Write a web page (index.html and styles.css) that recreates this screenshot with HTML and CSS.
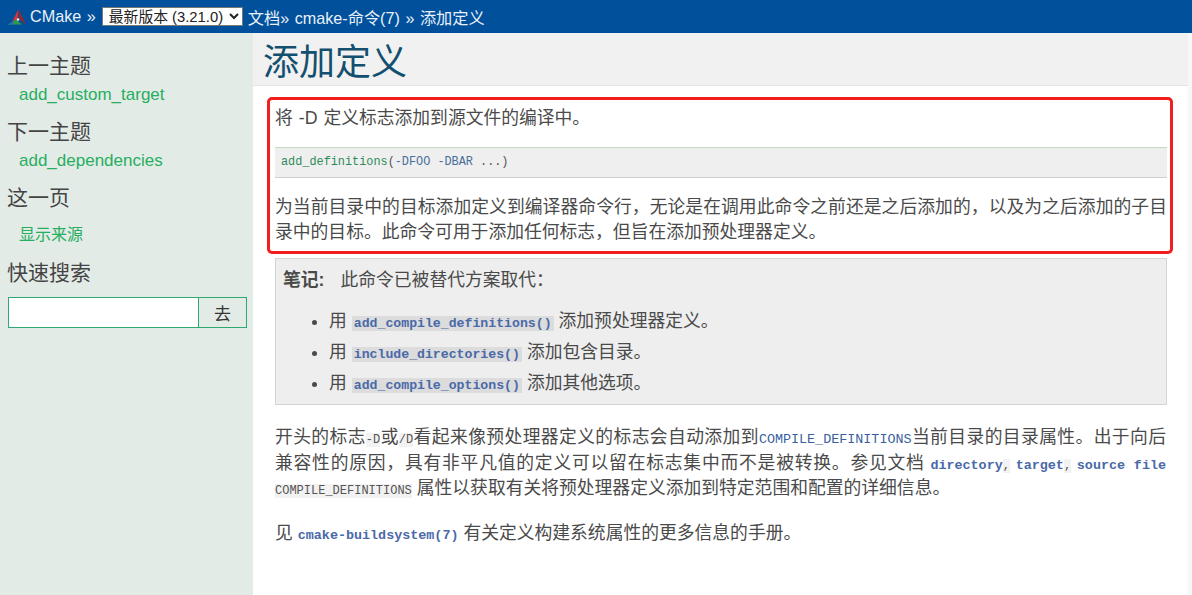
FILE: index.html
```html
<!DOCTYPE html>
<html lang="zh">
<head>
<meta charset="utf-8">
<title>添加定义</title>
<link rel="stylesheet" href="styles.css">
</head>
<body>
<header class="topbar">
  <svg class="logo" viewBox="0 0 18 16" width="18" height="16"><polygon points="10.5,0 9.5,10 4,13" fill="#d8333a"/><polygon points="10.5,0 18,15.5 11,10" fill="#8f2a33"/><polygon points="0,15.5 8,10.5 14,15.5" fill="#2f9a4c"/><polygon points="0,15.5 6,11.5 5,15.5" fill="#2a6fb0"/><circle cx="10" cy="10.5" r="1.3" fill="#e8eef0"/></svg>
  <span class="crumb">CMake »</span>
  <select class="version"><option>最新版本 (3.21.0)</option></select>
  <span class="crumb">文档» cmake-命令(7) » 添加定义</span>
</header>
<div class="page">
  <aside class="sidebar">
    <h4 class="side-h">上一主题</h4>
    <a class="side-link">add_custom_target</a>
    <h4 class="side-h">下一主题</h4>
    <a class="side-link">add_dependencies</a>
    <h4 class="side-h">这一页</h4>
    <a class="side-link source">显示来源</a>
    <h4 class="side-h">快速搜索</h4>
    <form class="search"><input class="search-input" type="text"><button class="search-btn" type="button">去</button></form>
  </aside>
  <main class="content">
    <div class="title-band"><h1 class="title">添加定义</h1></div>
    <div class="body">
      <div class="highlight">
        <p class="lead">将 -D 定义标志添加到源文件的编译中。</p>
        <pre class="code"><span class="fn">add_definitions</span>(<span class="arg">-DFOO</span> <span class="arg">-DBAR</span> ...)</pre>
        <p class="para">为当前目录中的目标添加定义到编译器命令行，无论是在调用此命令之前还是之后添加的，以及为之后添加的子目录中的目标。此命令可用于添加任何标志，但旨在添加预处理器定义。</p>
      </div>
      <div class="note">
        <p class="note-head"><b class="note-label">笔记:</b>此命令已被替代方案取代：</p>
        <ul class="note-list">
          <li>用 <code class="xref">add_compile_definitions()</code> 添加预处理器定义。</li>
          <li>用 <code class="xref">include_directories()</code> 添加包含目录。</li>
          <li>用 <code class="xref">add_compile_options()</code> 添加其他选项。</li>
        </ul>
      </div>
      <p class="para gap">开头的标志<code class="lit">-D</code>或<code class="lit">/D</code>看起来像预处理器定义的标志会自动添加到<code class="link-mono">COMPILE_DEFINITIONS</code>当前目录的目录属性。出于向后兼容性的原因，具有非平凡值的定义可以留在标志集中而不是被转换。参见文档 <code class="bold-mono">directory</code><code class="lit">,</code> <code class="bold-mono">target</code><code class="lit">,</code> <code class="bold-mono">source file</code> <code class="lit">COMPILE_DEFINITIONS</code> 属性以获取有关将预处理器定义添加到特定范围和配置的详细信息。</p>
      <p class="para gap2">见 <code class="bold-mono">cmake-buildsystem(7)</code> 有关定义构建系统属性的更多信息的手册。</p>
    </div>
  </main>
</div>
</body>
</html>
```
FILE: styles.css
```css
* { box-sizing: border-box; }
html, body { margin: 0; height: 100%; overflow: hidden; }
body { font-family: "Liberation Sans", "Noto Sans CJK SC", sans-serif; font-size: 17.8px; color: #4a4a4a; background: #f7f7f7; }
.topbar { height: 33px; background: #00509c; color: #e8f0f8; display: flex; align-items: center; padding-left: 8px; font-size: 16.2px; }
.logo { margin: 1px 4px 0 0; flex: none; }
.crumb { white-space: nowrap; word-spacing: 1px; }
.version { width: 141px; height: 19px; margin: 0 5px 0 6px; font: 14.8px "Liberation Sans", "Noto Sans CJK SC", sans-serif; padding: 0 0 0 2px; background: #fff; color: #222; border: 1px solid #777; border-radius: 0; }
.page { display: flex; height: 562px; }
.sidebar { width: 253px; flex: none; background: #e3ebe7; padding: 17px 6px 0 8px; }
.side-h { margin: 0 0 0 -1px; font-size: 21px; line-height: 31px; font-weight: 400; color: #444; }
.side-link { display: block; color: #27ae60; font-size: 17px; line-height: 22px; padding-left: 11px; margin: 3px 0 10px; }
.side-link.source { font-size: 16px; margin: 11px 0 11px; }
.search { display: flex; height: 31px; margin-top: 9px; border: 1px solid #2fa871; width: 239px; }
.search-input { flex: 1; width: 0; border: 0; padding: 0; background: #fff; border-right: 1px solid #2fa871; }
.search-btn { width: 47px; border: 0; padding: 0; background: #e3ebe7; color: #333; font: 17px "Noto Sans CJK SC", sans-serif; }
.content { flex: 1; min-width: 0; margin-right: 4px; background: #fff; }
.title-band { height: 53px; background: #f1f1f1; border-bottom: 1px solid #e4e4e4; padding-left: 10px; }
.title { margin: 0; font-size: 36px; line-height: 59px; font-weight: 400; color: #134f6f; }
.body { padding: 11px 0 0 14px; }
.highlight { width: 906px; height: 157px; border: 3.5px solid #f21d1d; border-radius: 5px; padding: 5px 0 0 5px; }
.lead { margin: 0; line-height: 27px; word-spacing: 1px; }
.code { margin: 15px 0 0; height: 31px; padding-left: 6px; font: 11.85px/29px "Liberation Mono", "Noto Sans CJK SC", monospace; background: #efefef; border-top: 1px solid #c8d8bf; border-bottom: 1px solid #cfcfcf; color: #555; width: 892px; }
.fn { color: #2e8b57; }
.arg { color: #4a6e9c; }
.para { margin: 0; line-height: 24.5px; text-align: justify; }
.highlight .para { margin-top: 17px; width: 892px; }
.note { margin: 4px 0 0 8px; width: 892px; height: 147px; background: #eeeeee; border: 1px solid #d4d4d4; padding: 8px 7px 0; }
.note-head { margin: 0; line-height: 27px; }
.note-label { margin-right: 16px; }
.note-list { margin: 12px 0 0; padding: 0 0 0 46px; }
.note-list li { line-height: 31px; }
.xref { font: 700 13.2px "Liberation Mono", "Noto Sans CJK SC", monospace; color: #4a69a8; background: #dcdcdc; padding: 0 2px; }
.gap { margin: 20px 0 0 8px; width: 891px; line-height: 25.5px; }
.gap2 { margin: 19px 0 0 8px; width: 891px; }
.lit { font: 12px "Liberation Mono", monospace; color: #555; background: #f2f2f2; }
.link-mono { font: 13.4px "Liberation Mono", monospace; color: #3a5fa0; }
.bold-mono { font: 700 13.4px "Liberation Mono", monospace; color: #4a69a8; }
```
